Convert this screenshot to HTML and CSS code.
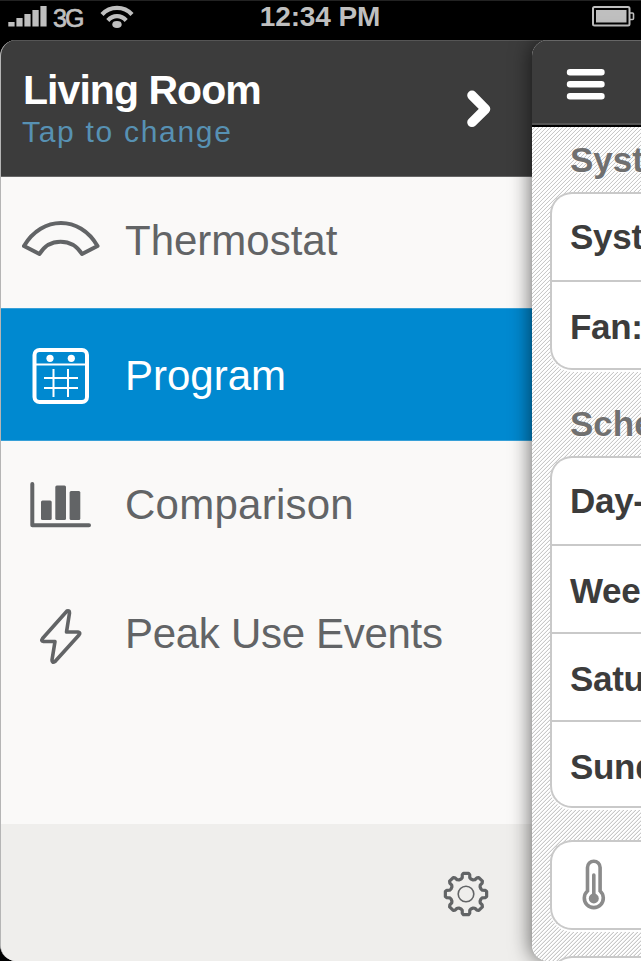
FILE: index.html
```html
<!DOCTYPE html>
<html lang="en">
<head>
<meta charset="utf-8">
<title>Thermostat</title>
<link rel="stylesheet" href="styles.css">
</head>
<body>
<header class="status">
  <div class="status-side">
    <svg class="signal" width="39" height="21" viewBox="0 0 39 21" fill="#bfbfbf"><path d="M.300 16h6.300v4.500H.300zM8.400 12h6.200v8.500H8.400zM16.400 8h6.200v12.500H16.400zM24.400 4h6.300v16.500H24.400zM32.400 0h6.200v20.500H32.400z"/></svg>
    <span class="network">3G</span>
    <svg class="wifi" width="34" height="24" viewBox="0 0 34 24" fill="none" stroke="#bfbfbf" stroke-width="4.200"><path d="M2 9.500C10 .7 24 .7 32 9.500"/><path d="M7.800 15.500C13 9.700 21 9.700 26.200 15.500"/><ellipse cx="17" cy="19.500" rx="4.700" ry="3.400" fill="#bfbfbf" stroke="none"/></svg>
  </div>
  <div class="clock">12:34 PM</div>
  <svg class="battery" width="43" height="21" viewBox="0 0 43 21" fill="none" stroke="#bfbfbf"><rect x="1" y="1" width="36.500" height="18.500" rx="1.500" stroke-width="2"/><rect x="4" y="4" width="30.500" height="12.500" fill="#bfbfbf" stroke="none"/><path d="M38 7h2.500q1 0 1 1v4.500q0 1-1 1H38" stroke-width="1.600"/></svg>
</header>
<main class="screen">
  <nav class="drawer">
    <div class="location">
      <div class="location-text">
        <h1 class="room">Living Room</h1>
        <p class="hint">Tap to change</p>
      </div>
      <svg class="chevron" width="26" height="40" viewBox="0 0 26 40" fill="none" stroke="#fff" stroke-width="9.600" stroke-linecap="round"><path d="M6 6.300L19.500 20L6 33.300" stroke-linejoin="round"/></svg>
    </div>
    <ul class="menu">
      <li class="item thermostat">
        <svg width="82" height="60" viewBox="20 210 82 60" fill="none" stroke="#626466" stroke-width="4" stroke-linejoin="round"><path d="M24 246C42 215.300 80 215.300 97.500 246L82 254C72 237.500 49 237.500 39.500 254Z"/></svg>
        <span>Thermostat</span>
      </li>
      <li class="item program">
        <svg width="82" height="60" viewBox="20 345 82 60" fill="none" stroke="#fff"><rect x="34.500" y="350" width="52.500" height="52" rx="5" stroke-width="4"/><path d="M36 364.500H86M44 378H78M44 388H78M53.500 369V397M68 369V397" stroke-width="2"/><circle cx="50" cy="358.300" r="3.600" fill="#fff" stroke="none"/><circle cx="71.300" cy="358.300" r="3.600" fill="#fff" stroke="none"/></svg>
        <span>Program</span>
      </li>
      <li class="item comparison">
        <svg width="82" height="60" viewBox="20 475 82 60" fill="#626466"><path d="M32.300 484V525.300H89" fill="none" stroke="#626466" stroke-width="4" stroke-linecap="round" stroke-linejoin="round"/><rect x="41" y="500.500" width="10.700" height="19.500" rx="1.500"/><rect x="55.300" y="485.500" width="10.700" height="34.500" rx="1.500"/><rect x="69.600" y="491" width="10.700" height="29" rx="1.500"/></svg>
        <span>Comparison</span>
      </li>
      <li class="item peak">
        <svg width="82" height="60" viewBox="20 607 82 60" fill="none" stroke="#626466" stroke-width="3.600" stroke-linejoin="round"><path d="M67 611Q69.500 610 69.500 613L66.500 632H78Q81 632.500 79 635L55 661.500Q52 663.500 52 660L55 641.500H43.500Q40.500 641 42.500 638.500Z"/></svg>
        <span>Peak Use Events</span>
      </li>
    </ul>
    <footer class="drawer-foot">
      <svg class="gear" width="48" height="48" viewBox="-24 -24 48 48" fill="none" stroke="#626466" stroke-linejoin="round"><path id="gear" stroke-width="3.200"/><circle r="7.800" stroke-width="1.600"/></svg>
    </footer>
  </nav>
  <section class="panel">
    <div class="toolbar">
      <svg width="40" height="32" viewBox="0 0 40 32" stroke="#fff" stroke-width="6.400" stroke-linecap="round"><path d="M4 4.300H35.500M4 16.300H35.500M4 28.300H35.500"/></svg>
    </div>
    <div class="settings">
      <h2 class="heading first">Syst</h2>
      <div class="card"><div class="row">Syst</div><div class="row low">Fan:</div></div>
      <h2 class="heading second">Sche</h2>
      <div class="card"><div class="row">Day-</div><div class="row low">Wee</div><div class="row low">Satu</div><div class="row last">Sund</div></div>
      <div class="card temp">
        <svg width="26" height="54" viewBox="581 858 26 54" fill="none" stroke="#8b8b8b"><path d="M587.500 891V867.500a6.300 6.300 0 0 1 12.600 0V891a9.500 9.500 0 1 1-12.600 0Z" stroke-width="3.600"/><path d="M593.800 875V898" stroke-width="3.600" stroke-linecap="round"/><circle cx="593.800" cy="898.500" r="5" fill="#8b8b8b" stroke="none"/></svg>
      </div>
      <div class="card more"></div>
    </div>
  </section>
</main>
<script src="gear.js"></script>
</body>
</html>
```
FILE: gear.js
```js
// Eight rounded teeth, listed as polar points (degrees from tooth centre, radius).
const tooth = [[-18, 15.8], [-13, 16.8], [-11, 19.5], [-7, 20.8], [7, 20.8], [11, 19.5], [13, 16.8], [18, 15.8]];
const points = [];
for (let i = 0; i < 8; i++) {
  for (const [angle, radius] of tooth) {
    const a = (i * 45 + angle) * Math.PI / 180;
    points.push((radius * Math.sin(a)).toFixed(2) + " " + (-radius * Math.cos(a)).toFixed(2));
  }
}
document.getElementById("gear").setAttribute("d", "M" + points.join("L") + "Z");
```
FILE: styles.css
```css
* { box-sizing: border-box; margin: 0; padding: 0; }
body {
  width: 641px;
  height: 961px;
  overflow: hidden;
  background: #000;
  font-family: "Liberation Sans", Arial, sans-serif;
}
svg { display: block; flex: none; }
.status {
  display: grid;
  grid-template-columns: 1fr auto 1fr;
  height: 40px;
  padding: 0 6px 0 8px;
  border-top: 1px solid #222;
  color: #bfbfbf;
}
.status-side { display: flex; align-items: flex-start; }
.signal { margin-top: 5px; }
.network { width: 36px; margin-left: 6px; font-size: 25px; line-height: 34px; letter-spacing: -2px; -webkit-text-stroke: .7px #bfbfbf; }
.wifi { margin: 4px 0 0 11px; }
.clock { margin-right: 3px; font-size: 28px; font-weight: bold; line-height: 31px; letter-spacing: -.1px; }
.battery { margin-top: 5px; justify-self: end; }
.screen { display: flex; height: 921px; }
.drawer {
  display: flex;
  flex-direction: column;
  flex: none;
  width: 562px;
  margin-right: -30px;
  border-left: 1px solid #b5b5b5;
  border-radius: 16px 0 0 16px;
  background: #faf9f8;
  overflow: hidden;
}
.location {
  display: flex;
  justify-content: space-between;
  height: 137px;
  padding: 27px 70px 0 22px;
  border-top: 1px solid #555;
  border-bottom: 1px solid #666;
  background: #3c3c3c;
}
.room { color: #fff; font-size: 41px; line-height: 44px; letter-spacing: -.95px; }
.hint { margin-left: -1px; color: #5791b3; font-size: 30px; line-height: 40px; letter-spacing: 1.7px; }
.chevron { margin-top: 21px; }
.menu { flex: 1; list-style: none; color: #626466; }
.item { display: flex; align-items: flex-start; padding-left: 19px; font-size: 42px; line-height: 48px; }
.item span { margin-left: 23px; white-space: nowrap; }
.thermostat { height: 131px; padding-top: 33px; }
.thermostat span { margin-top: 7px; }
.program { height: 133px; padding-top: 36px; background: #0089d0; border-top: 1px solid #36a0d8; border-bottom: 1px solid #36a0d8; color: #fff; }
.program span { margin-top: 7px; }
.comparison { height: 130px; padding-top: 34px; }
.comparison span { margin-top: 6px; letter-spacing: .25px; }
.peak { padding-top: 36px; }
.peak span { margin-top: 3px; letter-spacing: -.3px; }
.drawer-foot { display: flex; justify-content: flex-end; height: 137px; padding: 46px 72px 0 0; background: #efeeec; }
.panel {
  position: relative;
  flex: none;
  width: 109px;
  border-radius: 16px 0 0 16px;
  overflow: hidden;
  background: #fff;
  box-shadow: -2px 0 20px rgba(0, 0, 0, .55);
}
.toolbar {
  height: 87px;
  padding: 27px 0 0 34px;
  border-top: 1px solid #666;
  border-bottom: 2px solid #000;
  background: #3c3c3c;
  box-shadow: inset 0 -2px #555;
}
.settings {
  height: 834px;
  padding: 11px 0 0 18px;
  background: repeating-linear-gradient(135deg, #fff 0 1.400px, #c8c8c8 1.700px 2.500px, #fff 2.828px);
}
.heading { padding-left: 20px; color: #707070; font-size: 35px; line-height: 44px; white-space: nowrap; text-shadow: 0 1px #fff; }
.first { margin-bottom: 10px; }
.second { margin: 32px 0 10px; }
.card {
  width: 110px;
  border: 2px solid #c9c9c9;
  border-right: 0;
  border-radius: 22px 0 0 22px;
  background: #fff;
  box-shadow: 0 2px #fff;
}
.row { height: 86px; padding: 21px 0 0 18px; color: #3c3c3c; font-size: 35px; font-weight: bold; line-height: 44px; letter-spacing: -.3px; white-space: nowrap; }
.row + .row { height: 88px; padding-top: 23px; border-top: 2px solid #c9c9c9; }
.row + .last { height: 86px; }
.temp { height: 90px; margin-top: 32px; padding: 16px 0 0 29px; }
.more { height: 60px; margin-top: 26px; }
```
